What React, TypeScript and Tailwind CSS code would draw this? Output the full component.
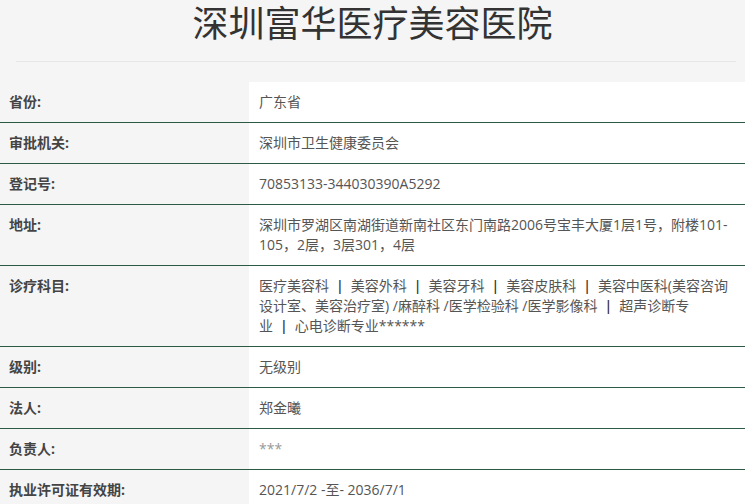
import { Fragment } from "react"

const departments = [
  "医疗美容科",
  "美容外科",
  "美容牙科",
  "美容皮肤科",
  "美容中医科(美容咨询设计室、美容治疗室) /麻醉科 /医学检验科 /医学影像科",
  "超声诊断专业",
  "心电诊断专业******",
]

// keep "x | y" together so a bar never starts or ends a line
function Departments() {
  return (
    <>
      {departments.map((d, i) => {
        const head = i > 0 ? d.slice(1) : d
        const body = i < departments.length - 1 ? head.slice(0, -1) : head
        const next = departments[i + 1]
        return (
          <Fragment key={i}>
            {body}
            {next && (
              <span className="whitespace-nowrap">
                {d.slice(-1)}
                <span className="mx-[7px] font-semibold text-[#333]">|</span>
                {next[0]}
              </span>
            )}
          </Fragment>
        )
      })}
    </>
  )
}

const rows: { label: string; value: React.ReactNode; muted?: boolean }[] = [
  { label: "省份:", value: "广东省" },
  { label: "审批机关:", value: "深圳市卫生健康委员会" },
  { label: "登记号:", value: "70853133-344030390A5292" },
  {
    label: "地址:",
    value: "深圳市罗湖区南湖街道新南社区东门南路2006号宝丰大厦1层1号，附楼101-105，2层，3层301，4层",
  },
  { label: "诊疗科目:", value: <Departments /> },
  { label: "级别:", value: "无级别" },
  { label: "法人:", value: "郑金曦" },
  { label: "负责人:", value: "***", muted: true },
  { label: "执业许可证有效期:", value: "2021/7/2 -至- 2036/7/1" },
]

export default function App() {
  return (
    <div
      className="min-h-screen bg-[#f5f5f5] text-[#333]"
      style={{ fontFamily: '"Open Sans", "Noto Sans CJK SC", sans-serif' }}
    >
      <div className="pt-[4px] h-[61px]">
        <h1 className="text-center text-[36px] leading-[40px] text-[#333] font-normal">
          深圳富华医疗美容医院
        </h1>
      </div>
      <div className="ml-[16px] mr-[9px] h-px bg-[#e6e6e6]" />

      <div className="mt-[20px]">
        {rows.map((r, i) => (
          <div key={i} className="grid grid-cols-[249px_1fr] border-b border-[#2c5a45]">
            <div className="px-[9px] py-[10px] text-[14px] leading-[20px] font-bold text-[#444]">
              {r.label}
            </div>
            <div
              className={
                "bg-white pl-[10px] pr-[12px] py-[10px] text-[14px] leading-[20px] " +
                (r.muted ? "text-[#999]" : "text-[#555]")
              }
            >
              {r.value}
            </div>
          </div>
        ))}
      </div>
    </div>
  )
}
